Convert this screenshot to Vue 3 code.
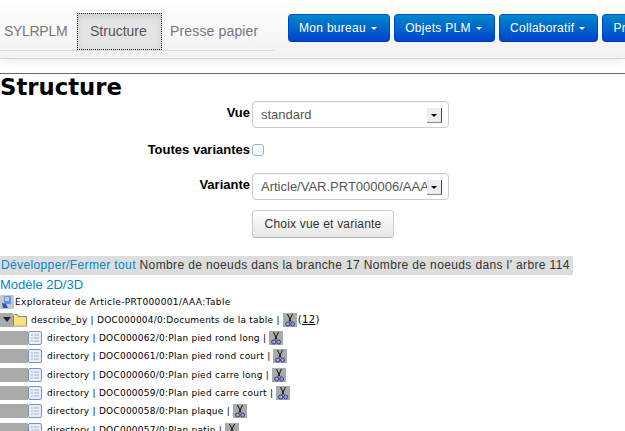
<template>
  <div class="page">
    <header class="navbar">
      <nav class="tabs">
        <a class="tab brand">SYLRPLM</a>
        <a class="tab active">Structure</a>
        <a class="tab">Presse papier</a>
      </nav>
      <div class="menus">
        <button v-for="m in menus" :key="m" class="menu-btn">{{ m }} <span class="caret"></span></button>
      </div>
    </header>
    <hr class="rule" />
    <h1>Structure</h1>

    <form class="form" @submit.prevent>
      <label class="lbl lbl-vue">Vue</label>
      <div class="select">
        <span class="select-text">standard</span>
        <span class="arrow"></span>
      </div>
      <label class="lbl lbl-check">Toutes variantes</label>
      <div class="check-cell"><span class="check"></span></div>
      <label class="lbl lbl-var">Variante</label>
      <div class="select select-tight">
        <span class="select-text">Article/VAR.PRT000006/AAA:Table</span>
        <span class="arrow"></span>
      </div>
      <span></span>
      <button class="submit">Choix vue et variante</button>
    </form>

    <div class="summary">
      <a class="link">Développer/Fermer tout</a> Nombre de noeuds dans la branche 17 Nombre de noeuds dans l' arbre 114
    </div>
    <a class="link model">Modèle 2D/3D</a>

    <div class="tree">
      <div class="root">
        <svg class="ico" viewBox="0 0 14 14">
          <rect width="14" height="14" rx="1" fill="#c6c6ce" />
          <rect x="4" y="1" width="7" height="8" rx="1" fill="#6a90dc" />
          <rect x="5" y="2" width="4" height="4" fill="#b4cef4" />
          <path d="M2 8l4 1 2 4H3z" fill="#2a55b8" />
        </svg>
        <span>Explorateur de Article-PRT000001/AAA:Table</span>
      </div>
      <div class="row first">
        <span class="toggle"><span class="tri"></span></span>
        <svg class="ico" viewBox="0 0 14 14">
          <path d="M.5 13V2.500q0-1 1-1h3l1 2h8v9.500z" fill="#f6e690" stroke="#8a8660" />
          <rect x="1" y="5" width="12" height="7.500" fill="#f8e27c" />
        </svg>
        <span class="name">describe_by | DOC000004/0:Documents de la table |</span>
        <svg class="cut" viewBox="0 0 14 14"><use href="#scissors" /></svg>
        <span class="count">(<u>12</u>)</span>
      </div>
      <div v-for="d in docs" :key="d" class="row">
        <span class="indent"></span>
        <svg class="ico" viewBox="0 0 14 14">
          <rect x=".5" y=".5" width="13" height="13" rx="1.500" fill="#e8eef7" stroke="#7a90c6" />
          <path d="M3 4h2M3 7h2M3 10h2M6 4h5M6 7h5M6 10h5" stroke="#a6b2c6" />
        </svg>
        <span class="name">directory | {{ d }} |</span>
        <svg class="cut" viewBox="0 0 14 14"><use href="#scissors" /></svg>
      </div>
    </div>

    <svg width="0" height="0" class="defs">
      <symbol id="scissors" viewBox="0 0 14 14">
        <rect width="14" height="14" fill="#aaa" />
        <path d="M4.500 1L8 8.500M9.500 1L6 8.500" fill="none" stroke="#111" stroke-width="1" />
        <ellipse cx="4.800" cy="11" rx="2.200" ry="2" fill="none" stroke="#2a35b5" />
        <ellipse cx="9.600" cy="11" rx="1.900" ry="2" fill="none" stroke="#2a35b5" />
      </symbol>
    </svg>
  </div>
</template>

<script setup>
const menus = ['Mon bureau', 'Objets PLM', 'Collaboratif', 'Projets']
const docs = [
  'DOC000062/0:Plan pied rond long',
  'DOC000061/0:Plan pied rond court',
  'DOC000060/0:Plan pied carre long',
  'DOC000059/0:Plan pied carre court',
  'DOC000058/0:Plan plaque',
  'DOC000057/0:Plan patin'
]
</script>

<style>
html, body { margin: 0; background: #fff; }
</style>

<style scoped>
.page {
  width: 625px;
  height: 431px;
  overflow: hidden;
  font-family: "Liberation Sans", Arial, sans-serif;
  font-size: 13px;
  color: #333;
  background: #fff;
}

.navbar {
  display: flex;
  height: 59px;
  box-sizing: border-box;
  padding-top: 13px;
  background: linear-gradient(to bottom, #fff, #f2f2f2);
  border-bottom: 1px solid #d4d4d4;
  box-shadow: 0 1px 10px rgba(0,0,0,.1);
}

.tabs {
  display: flex;
  flex: none;
  width: 274px;
  height: 38px;
  box-sizing: border-box;
  border-bottom: 1px solid #ddd;
  margin-right: 14px;
}

.tab {
  height: 37px;
  line-height: 37px;
  padding: 0 9px 0 4px;
  font-size: 14px;
  color: #777;
}

.tab.brand {
  width: 77px;
  box-sizing: border-box;
  padding: 0 0 0 4px;
  letter-spacing: -.3px;
}

.tab.active {
  padding: 0 13px;
  box-sizing: border-box;
  width: 85px;
  color: #555;
  background: #e5e5e5;
  outline: 1px dotted #222;
  outline-offset: -1px;
  box-shadow: inset 0 3px 8px rgba(0,0,0,.12);
}

.tab:last-child {
  padding-left: 8px;
  letter-spacing: .15px;
}

.menus {
  display: flex;
  flex: none;
  gap: 4.5px;
  align-items: flex-start;
  padding-top: 1px;
}

.menu-btn {
  height: 28px;
  padding: 0 12px 0 10px;
  border: 1px solid #0044cc;
  border-color: #0050cc #0044cc #003bb3;
  border-radius: 4px;
  background: linear-gradient(to bottom, #0088cc, #0044cc);
  color: #fff;
  font: 12px "Liberation Sans", Arial, sans-serif;
  letter-spacing: .3px;
  white-space: nowrap;
}

.caret {
  display: inline-block;
  vertical-align: middle;
  margin-left: 1px;
  border-top: 3px solid #fff;
  border-left: 3px solid transparent;
  border-right: 3px solid transparent;
}

.rule {
  margin: 14px 0 0;
  border: 0;
  border-top: 1px solid #666;
}

h1 {
  margin: 0;
  height: 27px;
  font: bold 22.75px/27px "DejaVu Sans", sans-serif;
  color: #000;
}

.form {
  display: grid;
  grid-template-columns: 250px 197px;
  column-gap: 2px;
}

.lbl {
  text-align: right;
  font: bold 13px "Liberation Sans", sans-serif;
  color: #000;
}

.select {
  box-sizing: border-box;
  display: flex;
  align-items: center;
  height: 27px;
  padding: 0 6px 0 8px;
  border: 1px solid #ccc;
  border-radius: 4px;
  background: #fff;
  font-size: 13px;
  color: #555;
  overflow: hidden;
  white-space: nowrap;
  box-shadow: inset 0 1px 1px rgba(0,0,0,.05);
}

.select-text {
  flex: 1;
  min-width: 0;
  overflow: hidden;
}

.arrow {
  flex: none;
  position: relative;
  width: 15px;
  height: 15px;
  margin-top: 1px;
  box-sizing: border-box;
  background: #ecedf2;
  border-right: 1px solid #444;
  border-bottom: 1px solid #888;
}

.arrow::after {
  content: "";
  position: absolute;
  left: 4px;
  top: 6px;
  border-top: 3px solid #000;
  border-left: 3px solid transparent;
  border-right: 3px solid transparent;
}

.check-cell { padding-top: 16px; height: 29px; box-sizing: content-box; }
.lbl-check { padding-top: 14px; }
.lbl-var { padding-top: 4px; }
.lbl-vue { padding-top: 4px; }

.check {
  display: block;
  width: 12px;
  height: 12px;
  box-sizing: border-box;
  border: 1px solid #9fb2c6;
  border-radius: 3px;
  background: #f6f9fb;
}

.submit {
  grid-column: 2;
  justify-self: start;
  width: 142px;
  height: 28px;
  margin-top: 10px;
  border: 1px solid #ccc;
  border-bottom-color: #b3b3b3;
  border-radius: 4px;
  background: linear-gradient(to bottom, #fff, #e6e6e6);
  font: 12px "Liberation Sans", Arial, sans-serif;
  letter-spacing: .2px;
  color: #333;
}

.summary {
  width: 573px;
  height: 19px;
  margin-top: 18px;
  line-height: 19px;
  padding-left: 1px;
  box-sizing: border-box;
  background: #ddd;
  white-space: nowrap;
  font-size: 12px;
  letter-spacing: .37px;
}

.link { color: #0088cc; }

.model {
  display: block;
  height: 18px;
  line-height: 20px;
  font-size: 13px;
}

.tree {
  font: 9px "DejaVu Sans", sans-serif;
  letter-spacing: .36px;
  color: #000;
  white-space: nowrap;
}

.root, .row {
  display: flex;
  align-items: center;
  height: 18.3px;
}

.root { height: 17px; }
.row.first { height: 19px; }

.ico { flex: none; width: 14px; height: 14px; }
.cut { flex: none; width: 14px; height: 14px; margin-left: 3px; }

.root span { margin-left: 1px; }
.name { margin-left: 5px; letter-spacing: .24px; }
.row.first .name { margin-left: 4px; }
.count { margin-left: 1px; font-size: 10px; }

.toggle {
  flex: none;
  display: flex;
  align-items: center;
  justify-content: center;
  width: 13px;
  height: 14px;
  background: #aaa;
}

.tri {
  border-top: 5px solid #222;
  border-left: 4px solid transparent;
  border-right: 4px solid transparent;
}

.indent {
  flex: none;
  width: 28px;
  height: 14px;
  background: #aaa;
}

.defs { position: absolute; }
</style>
